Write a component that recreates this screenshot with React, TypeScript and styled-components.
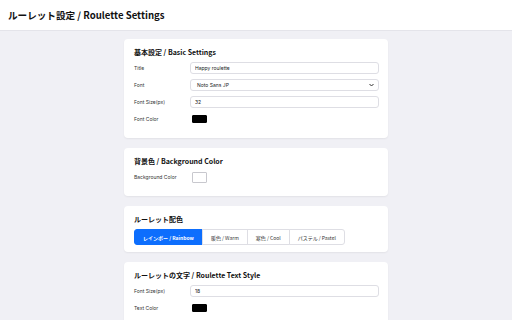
import styled, { createGlobalStyle } from "styled-components";

const GlobalStyle = createGlobalStyle`
  * { box-sizing: border-box; }
  html, body { margin: 0; padding: 0; }
  body {
    background: #f0f0f5;
    font-family: Inter, "Noto Sans CJK JP", sans-serif;
    color: #222;
  }
`;

const schemes = ["レインボー / Rainbow", "暖色 / Warm", "寒色 / Cool", "パステル / Pastel"];

const App = () => {
  return (
    <>
      <GlobalStyle />
      <Page>
        <Header>
          <HeaderTitle>ルーレット設定 / Roulette Settings</HeaderTitle>
        </Header>

        <Main>
          <Card>
            <CardTitle>基本設定 / Basic Settings</CardTitle>
            <Fields>
              <Row>
                <Label>Title</Label>
                <TextInput defaultValue="Happy roulette" />
              </Row>
              <Row>
                <Label>Font</Label>
                <SelectBox>
                  <span>Noto Sans JP</span>
                  <svg width="5" height="4" viewBox="0 0 10 8">
                    <path d="M1 2 L5 6 L9 2" fill="none" stroke="#333" strokeWidth="2" />
                  </svg>
                </SelectBox>
              </Row>
              <Row>
                <Label>Font Size(px)</Label>
                <TextInput defaultValue="32" />
              </Row>
              <Row>
                <Label>Font Color</Label>
                <Swatch $color="#000" $height={8} />
              </Row>
            </Fields>
          </Card>

          <Card>
            <CardTitle>背景色 / Background Color</CardTitle>
            <Fields>
              <Row>
                <Label>Background Color</Label>
                <Swatch $color="#fff" $height={11} />
              </Row>
            </Fields>
          </Card>

          <Card>
            <CardTitle>ルーレット配色</CardTitle>
            <ButtonGroup>
              {schemes.map((s, i) => (
                <SchemeButton key={s} $active={i === 0}>
                  {s}
                </SchemeButton>
              ))}
            </ButtonGroup>
          </Card>

          <Card>
            <CardTitle>ルーレットの文字 / Roulette Text Style</CardTitle>
            <Fields>
              <Row>
                <Label>Font Size(px)</Label>
                <TextInput defaultValue="18" />
              </Row>
              <Row>
                <Label>Text Color</Label>
                <Swatch $color="#000" $height={8} />
              </Row>
            </Fields>
          </Card>
        </Main>
      </Page>
    </>
  );
};

export default App;

const Page = styled.div`
  width: 512px;
  height: 320px;
  overflow: hidden;
`;

const Header = styled.header`
  height: 31px;
  background: #ffffff;
  border-bottom: 1px solid #e4e4ea;
  display: flex;
  align-items: center;
  padding: 0 8px;
`;

const HeaderTitle = styled.h1`
  margin: 0;
  font-family: "Noto Sans CJK JP", sans-serif;
  font-size: 9.6px;
  font-weight: 700;
  color: #111;
`;

const Main = styled.main`
  display: flex;
  flex-direction: column;
  align-items: center;
  gap: 10px;
  padding-top: 8px;
`;

const Card = styled.section`
  width: 264px;
  background: #ffffff;
  border-radius: 4px;
  box-shadow: 0 1px 2px rgba(0, 0, 0, 0.06);
  padding: 8px 10px 7px;
`;

const CardTitle = styled.h2`
  margin: 0 0 4px;
  font-family: "Noto Sans CJK JP", sans-serif;
  font-size: 7px;
  line-height: 11px;
  font-weight: 700;
  color: #111;
`;

const Fields = styled.div`
  display: flex;
  flex-direction: column;
  gap: 5px;
  padding-bottom: 6px;
`;

const Row = styled.div`
  display: flex;
  align-items: center;
  height: 12px;
`;

const Label = styled.label`
  width: 56px;
  flex-shrink: 0;
  font-size: 5px;
  color: #333;
`;

const TextInput = styled.input`
  flex: 1;
  height: 12px;
  margin-right: -1px;
  border: 1px solid #dedee4;
  border-radius: 3px;
  padding: 0 4px;
  font-family: Inter, sans-serif;
  font-size: 5px;
  color: #222;
  outline: none;
`;

const SelectBox = styled.div`
  flex: 1;
  height: 12px;
  margin-right: -1px;
  border: 1px solid #dedee4;
  border-radius: 3px;
  padding: 0 4px 0 6px;
  display: flex;
  align-items: center;
  justify-content: space-between;
  font-size: 5px;
  color: #222;
`;

const Swatch = styled.span<{ $color: string; $height: number }>`
  display: block;
  margin-left: 2px;
  width: 15px;
  height: ${(p) => p.$height}px;
  background: ${(p) => p.$color};
  border: 1px solid ${(p) => (p.$color === "#fff" ? "#c8c8ce" : p.$color)};
  border-radius: 1px;
`;

const ButtonGroup = styled.div`
  display: flex;
`;

const SchemeButton = styled.button<{ $active: boolean }>`
  height: 16px;
  padding: 0 8px;
  margin-left: -1px;
  font-family: "Noto Sans CJK JP", sans-serif;
  font-size: 5px;
  font-weight: ${(p) => (p.$active ? 700 : 400)};
  color: ${(p) => (p.$active ? "#ffffff" : "#333")};
  background: ${(p) => (p.$active ? "#0d6efd" : "#ffffff")};
  border: 1px solid ${(p) => (p.$active ? "#0d6efd" : "#dedee4")};
  border-radius: 0;
  &:first-child {
    margin-left: 0;
    border-radius: 3px 0 0 3px;
  }
  &:last-child {
    border-radius: 0 3px 3px 0;
  }
`;
